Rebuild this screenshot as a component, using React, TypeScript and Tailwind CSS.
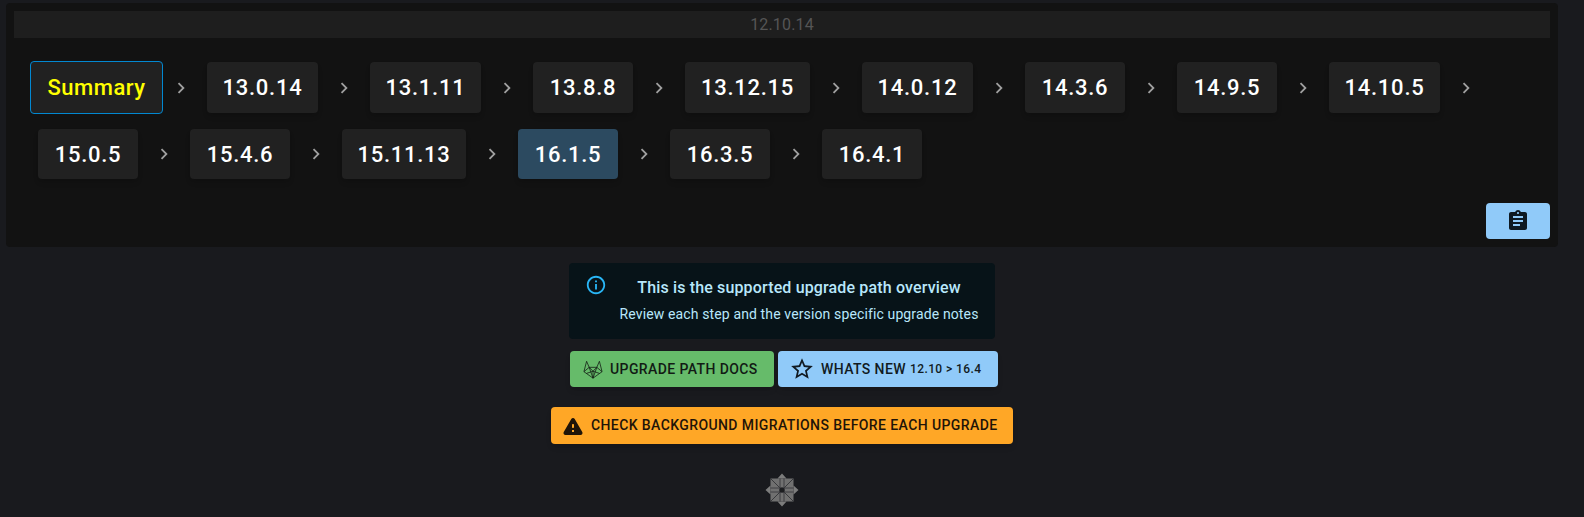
const ROW_ONE = [
  { label: '13.0.14', width: 'w-[111px]' },
  { label: '13.1.11', width: 'w-[111px]' },
  { label: '13.8.8', width: 'w-[100px]' },
  { label: '13.12.15', width: 'w-[125px]' },
  { label: '14.0.12', width: 'w-[111px]' },
  { label: '14.3.6', width: 'w-[100px]' },
  { label: '14.9.5', width: 'w-[100px]' },
  { label: '14.10.5', width: 'w-[111px]' },
];

const ROW_TWO = [
  { label: '15.0.5', width: 'w-[100px]' },
  { label: '15.4.6', width: 'w-[100px]' },
  { label: '15.11.13', width: 'w-[124px]' },
  { label: '16.1.5', width: 'w-[100px]', active: true },
  { label: '16.3.5', width: 'w-[100px]' },
  { label: '16.4.1', width: 'w-[100px]' },
];

function Chevron() {
  return (
    <svg viewBox="0 0 24 24" className="h-[22px] w-[22px] fill-[#a0a0a0]">
      <path d="M8.59 16.59 13.17 12 8.59 7.41 10 6l6 6-6 6z" />
    </svg>
  );
}

function Arrow({ wide = true }: { wide?: boolean }) {
  return (
    <div className={`flex items-center justify-center ${wide ? 'w-[52px]' : 'w-[44px] pr-[8px]'}`}>
      <Chevron />
    </div>
  );
}

function VersionButton({ label, width, active, height }: { label: string; width: string; active?: boolean; height: string }) {
  return (
    <button
      className={`flex items-center justify-center rounded text-[22px] font-medium tracking-[0.75px] text-white shadow-md ${width} ${height} ${active ? 'bg-[#2c4a60]' : 'bg-[#212121]'}`}
    >
      {label}
    </button>
  );
}

function GitlabIcon() {
  return (
    <svg viewBox="0 0 24 22" fill="none" stroke="#121a14" strokeWidth="0.9" strokeLinejoin="round" className="h-[19px] w-[22px]">
      <path d="M12 21 1.5 13.5 4.6 1.5 7.6 8.5h8.8l3-7 3.1 12z" />
      <path d="M12 21 7.6 8.5M12 21l4.4-12.5" />
      <path d="M1.5 13.5 7.6 8.5M22.5 13.5l-6.1-5M4.5 15.5 12 13l7.5 2.5M7.6 8.5 12 13l4.4-4.5M12 13v8" />
    </svg>
  );
}

function ProjectLogo() {
  return (
    <svg viewBox="0 0 34 34" className="h-[34px] w-[34px]">
      <rect x="5.5" y="5.5" width="23" height="23" fill="#707070" />
      <path d="M17 0.5 21.5 5.5h-9zM17 33.5l4.5-5h-9zM0.5 17l5-4.5v9zM33.5 17l-5-4.5v9z" fill="#7c7c7c" />
      <path d="M15 5.5v23M19 5.5v23M5.5 15h23M5.5 19h23" stroke="#38393c" strokeWidth="0.9" />
      <path d="M6 6l9 9M28 6l-9 9M6 28l9-9M28 28l-9-9" stroke="#38393c" strokeWidth="1" />
      <circle cx="17" cy="17" r="2.6" fill="#1c1d20" />
    </svg>
  );
}

export default function App() {
  return (
    <div className="min-h-screen overflow-hidden bg-[#191a1e] pt-[3px] pr-[26px] pl-[6px] font-['Roboto',sans-serif]">
      <div className="flex h-[244px] flex-col rounded bg-[#121212] px-[8px] pt-[8px]">
        <div className="flex h-[27px] items-center justify-center bg-[#1e1e1e] text-base tracking-[0.15px] text-[#555555]">12.10.14</div>

        <div className="mt-[23px] ml-[16px] flex h-[53px] items-center">
          <button className="flex h-[53px] w-[133px] items-center justify-center rounded border border-[#0288d1] bg-[#212121] text-[22px] font-medium tracking-[0.5px] text-[#ffff00]">
            Summary
          </button>
          <Arrow wide={false} />
          {ROW_ONE.map((v) => (
            <div key={v.label} className="flex items-center">
              <VersionButton label={v.label} width={v.width} height="h-[51px]" />
              <Arrow />
            </div>
          ))}
        </div>

        <div className="mt-[15px] ml-[24px] flex h-[50px] items-center">
          {ROW_TWO.map((v, i) => (
            <div key={v.label} className="flex items-center">
              <VersionButton label={v.label} width={v.width} active={v.active} height="h-[50px]" />
              {i < ROW_TWO.length - 1 && <Arrow />}
            </div>
          ))}
        </div>

        <div className="mt-[24px] flex justify-end">
          <button className="flex h-[36px] w-[64px] items-center justify-center rounded bg-[#90caf9]">
            <svg viewBox="0 0 24 24" className="h-[24px] w-[24px] fill-[#0e1922]">
              <path d="M19 3h-4.18C14.4 1.84 13.3 1 12 1c-1.3 0-2.4.84-2.82 2H5c-1.1 0-2 .9-2 2v14c0 1.1.9 2 2 2h14c1.1 0 2-.9 2-2V5c0-1.1-.9-2-2-2zm-7 0c.55 0 1 .45 1 1s-.45 1-1 1-1-.45-1-1 .45-1 1-1zm2 14H7v-2h7v2zm3-4H7v-2h10v2zm0-4H7V7h10v2z" />
            </svg>
          </button>
        </div>
      </div>

      <div className="flex flex-col items-center">
        <div className="mt-[16px] flex h-[76px] w-[426px] rounded bg-[#071318] pt-[13px] pl-[16px] text-[#b8e7fb]">
          <svg viewBox="0 0 24 24" className="mt-[-2px] h-[22px] w-[22px] shrink-0 fill-[#29b6f6]">
            <path d="M11 7h2v2h-2zm0 4h2v6h-2zm1-9C6.48 2 2 6.48 2 12s4.48 10 10 10 10-4.48 10-10S17.52 2 12 2zm0 18c-4.41 0-8-3.59-8-8s3.59-8 8-8 8 3.59 8 8-3.59 8-8 8z" />
          </svg>
          <div className="ml-[12px] w-[360px] text-center">
            <div className="mt-[2px] text-[16px] leading-[20px] font-medium tracking-[0.15px]">This is the supported upgrade path overview</div>
            <div className="mt-[6px] text-[14px] leading-[20px] tracking-[0.13px]">Review each step and the version specific upgrade notes</div>
          </div>
        </div>

        <div className="mt-[12px] ml-[4px] flex gap-[4px]">
          <button className="flex h-[36px] w-[204px] items-center rounded bg-[#66bb6a] pl-[12px] text-[14px] font-medium tracking-[0.4px] text-[#121a14] shadow-md">
            <GitlabIcon />
            <span className="ml-[6px]">UPGRADE PATH DOCS</span>
          </button>
          <button className="flex h-[36px] w-[220px] items-center rounded bg-[#90caf9] pl-[11px] text-[14px] font-medium tracking-[0.4px] text-[#111a22] shadow-md">
            <svg viewBox="0 0 24 24" className="h-[26px] w-[26px] fill-[#111a22]">
              <path d="M22 9.24l-7.19-.62L12 2 9.19 8.63 2 9.24l5.46 4.73L5.82 21 12 17.27 18.18 21l-1.63-7.03L22 9.24zM12 15.4l-3.76 2.27 1-4.28-3.32-2.88 4.38-.38L12 6.1l1.71 4.04 4.38.38-3.32 2.88 1 4.28L12 15.4z" />
            </svg>
            <span className="ml-[6px]">WHATS NEW</span>
            <span className="ml-[4px] text-[12px]">12.10 &gt; 16.4</span>
          </button>
        </div>

        <button className="mt-[20px] flex h-[37px] w-[462px] items-center rounded bg-[#ffa726] pl-[10px] text-[14px] font-medium tracking-[0.4px] text-[#1f1408] shadow-md">
          <svg viewBox="0 0 24 24" className="h-[24px] w-[24px] fill-[#1f1408]">
            <path d="M4.47 21h15.06c1.54 0 2.5-1.67 1.73-3L13.73 4.99c-.77-1.33-2.69-1.33-3.46 0L2.74 18c-.77 1.33.19 3 1.73 3zM12 14c-.55 0-1-.45-1-1v-2c0-.55.45-1 1-1s1 .45 1 1v2c0 .55-.45 1-1 1zm1 4h-2v-2h2v2z" />
          </svg>
          <span className="ml-[6px]">CHECK BACKGROUND MIGRATIONS BEFORE EACH UPGRADE</span>
        </button>

        <div className="mt-[29px]">
          <ProjectLogo />
        </div>
      </div>
    </div>
  );
}
